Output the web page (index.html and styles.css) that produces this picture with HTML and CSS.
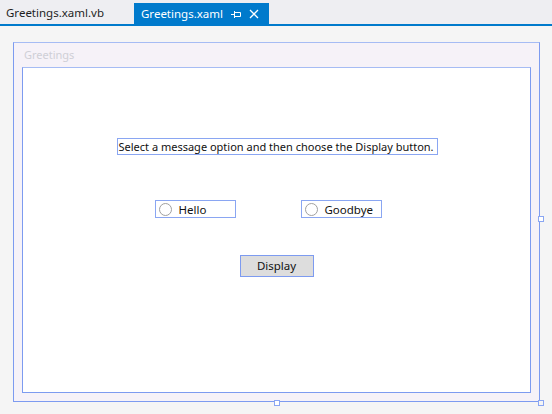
FILE: index.html
```html
<!DOCTYPE html>
<html>
<head>
<meta charset="utf-8">
<link rel="stylesheet" href="styles.css">
</head>
<body>
<div class="tabs">
  <div class="tab">Greetings.xaml.vb</div>
  <div class="tab active">
    <span class="tab-label">Greetings.xaml</span>
    <svg class="pin" width="10" height="8" viewBox="0 0 10 8"><path d="M0 4.5H3M3.5 1V8M3.5 2.5H9.5V6.5H3.5" fill="none" stroke="#fff" stroke-width="1"/></svg>
    <svg class="close" width="10" height="10" viewBox="0 0 10 10"><path d="M1 1L9 9M9 1L1 9" stroke="#fff" stroke-width="1.3"/></svg>
  </div>
</div>
<div class="surface">
  <div class="window">
    <div class="title">Greetings</div>
    <div class="client">
      <div class="label">Select a message option and then choose the Display button.</div>
      <div class="radios">
        <div class="radio"><span class="dot"></span>Hello</div>
        <div class="radio"><span class="dot"></span>Goodbye</div>
      </div>
      <div class="button">Display</div>
    </div>
    <span class="handle h-right"></span>
    <span class="handle h-bottom"></span>
    <span class="handle h-corner"></span>
  </div>
</div>
</body>
</html>
```
FILE: styles.css
```css
html, body {
  margin: 0;
  padding: 0;
  width: 552px;
  height: 414px;
  overflow: hidden;
  background: #f5f5f5;
  font-family: "Noto Sans", "Open Sans", sans-serif;
  font-size: 12px;
  color: #1e1e1e;
}
.tabs {
  display: flex;
  align-items: flex-end;
  height: 24px;
  background: #eeeef2;
  border-bottom: 2px solid #007acc;
}
.tab {
  height: 21px;
  line-height: 20px;
  padding: 0 6px;
  width: 134px;
  box-sizing: border-box;
  font-size: 11.5px;
}
.tab.active {
  width: 135px;
  background: #007acc;
  color: #fff;
  display: flex;
  align-items: center;
  padding-left: 7px;
}
.tab-label {
  width: 90px;
}
.close {
  margin-left: 8px;
}
.surface {
  padding: 16px 0 0 13px;
}
.window {
  position: relative;
  border: 1px solid #7d9bf0;
  border-top-color: #a6bcf4;
  background: #f6f2f8;
  padding: 0 8px 8px 8px;
  width: 509px;
  height: 350px;
}
.title {
  height: 24px;
  line-height: 23px;
  padding-left: 2px;
  color: #cfcfd6;
  font-size: 11px;
}
.client {
  width: 507px;
  height: 324px;
  background: #fff;
  border: 1px solid #7d9bf0;
  border-top-color: #a6bcf4;
  display: flex;
  flex-direction: column;
  align-items: center;
}
.label {
  margin-top: 70px;
  margin-left: 1px;
  width: 318px;
  height: 15px;
  border: 1px solid #8aa6f2;
  line-height: 15px;
  font-size: 11px;
  padding-left: 1px;
  white-space: nowrap;
  color: #111;
}
.radios {
  display: flex;
  gap: 65px;
  margin-top: 45px;
  margin-left: -17px;
}
.radio {
  width: 79px;
  height: 16px;
  border: 1px solid #8aa6f2;
  display: flex;
  align-items: center;
  font-size: 11.5px;
  color: #111;
}
.dot {
  border: 1.3px solid #a0a0a0;
  border-radius: 50%;
  margin: 0 7px 0 3px;
  box-sizing: border-box;
  width: 13px;
  height: 13px;
}
.button {
  margin-top: 37px;
  width: 72px;
  height: 20px;
  border: 1.5px solid #7d9bf0;
  background: #dddddd;
  text-align: center;
  line-height: 20px;
  font-size: 11.5px;
  color: #111;
}
.handle {
  position: absolute;
  width: 4px;
  height: 4px;
  border: 1px solid #8aa6f2;
  background: #fff;
}
.h-right {
  right: -5px;
  top: 173px;
}
.h-bottom {
  left: 260px;
  bottom: -5px;
}
.h-corner {
  right: -5px;
  bottom: -5px;
  background: #f5f5f5;
}
```
